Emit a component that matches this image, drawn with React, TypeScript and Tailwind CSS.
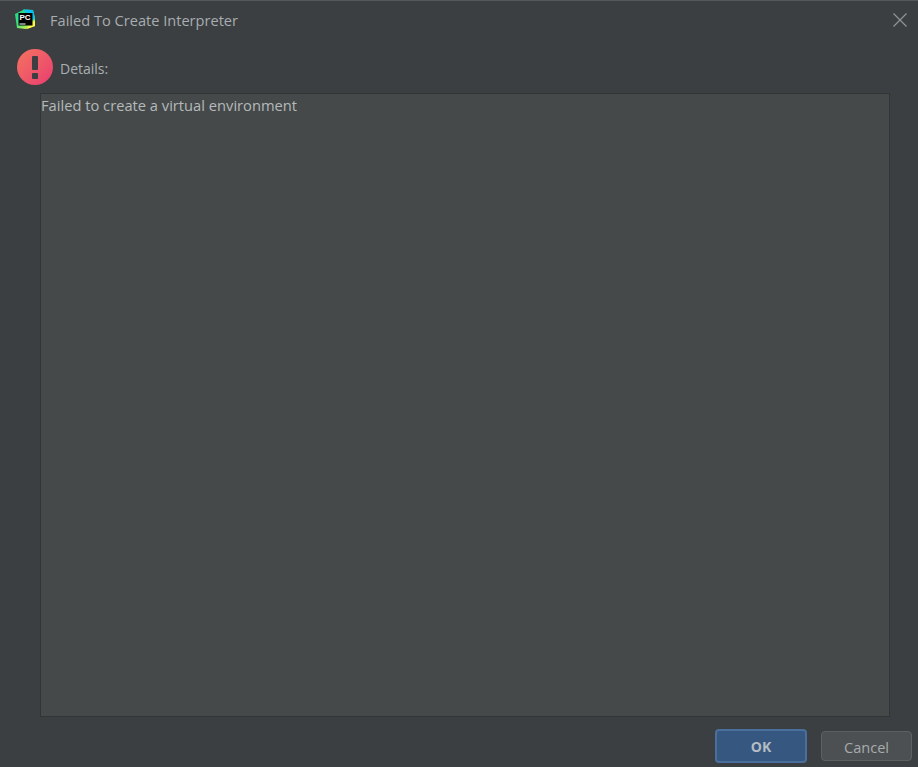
const PyCharmIcon = () => (
  <svg width="22" height="22" viewBox="0 0 22 22" className="-mt-[1px] shrink-0">
    <defs>
      <linearGradient id="pc-a" x1="0" y1="0" x2="0.6" y2="1">
        <stop offset="0" stopColor="#21d789" />
        <stop offset="0.65" stopColor="#3fe07a" />
        <stop offset="1" stopColor="#d8f04a" />
      </linearGradient>
    </defs>
    <path d="M1 5 L10 0.5 L19 1 L21 9 L21 17 L12 20 L3 19 Z" fill="url(#pc-a)" />
    <path d="M9 0.5 L19 1 L21 10 L18 11 Z" fill="#07c3f2" />
    <path d="M13 20 L21 17 L21 12 L17 13 Z" fill="#fcf84a" />
    <rect x="4.5" y="4" width="14" height="12.5" fill="#000" />
    <text x="5.5" y="11" fontSize="8" fontWeight="700" fill="#fff" fontFamily="'Liberation Sans', sans-serif">PC</text>
    <rect x="5.5" y="14.5" width="6" height="1" fill="#fff" />
  </svg>
);

const CloseIcon = () => (
  <svg width="14" height="14" viewBox="0 0 14 14" className="-mt-[2px] shrink-0">
    <path d="M0.5 0.5 L13.5 13.5 M13.5 0.5 L0.5 13.5" stroke="#8f9396" strokeWidth="1.2" fill="none" />
  </svg>
);

const ErrorIcon = () => (
  <div className="flex h-[36px] w-[36px] shrink-0 flex-col items-center justify-center gap-[3px] rounded-full bg-gradient-to-br from-[#f4725e] to-[#e93a70]">
    <div className="h-[14px] w-[6px] rounded-[1px] bg-[#3c3f41]" />
    <div className="h-[6px] w-[6px] rounded-[1px] bg-[#3c3f41]" />
  </div>
);

export default function App() {
  return (
    <div className="flex h-[767px] w-[918px] flex-col overflow-hidden border-t border-[#555758] bg-[#3c3f41] font-['Open_Sans','Noto_Sans',sans-serif] text-[14px] text-[#a9b0b4]">
      {/* Title bar */}
      <div className="flex h-[39px] shrink-0 items-center pl-[14px] pr-[11px]">
        <PyCharmIcon />
        <span className="ml-[14px] flex-1 text-[14.6px] text-[#a7adb0]">Failed To Create Interpreter</span>
        <CloseIcon />
      </div>

      {/* Details label */}
      <div className="mt-[9px] flex h-[36px] shrink-0 items-center gap-[7px] pl-[17px]">
        <ErrorIcon />
        <span className="pt-[2px]">Details:</span>
      </div>

      {/* Message area */}
      <div className="ml-[40px] mr-[28px] mt-[8px] h-[624px] shrink-0 border border-[#323435] bg-[#45494a] text-[14.7px] text-[#b4b9ba]">
        Failed to create a virtual environment
      </div>

      {/* Footer */}
      <div className="flex flex-1 items-start justify-end gap-[14px] pr-[6px] pt-[12px]">
        <button className="h-[34px] w-[92px] rounded-[4px] border-2 border-[#4a6f9c] bg-[#365880] text-[14px] font-bold text-[#b4bcc4]">
          OK
        </button>
        <button className="mt-[2px] h-[30px] w-[91px] rounded-[4px] border border-[#5e6060] bg-[#4c5052] pt-[3px] text-[14.6px] text-[#a7abae]">
          Cancel
        </button>
      </div>
    </div>
  );
}
